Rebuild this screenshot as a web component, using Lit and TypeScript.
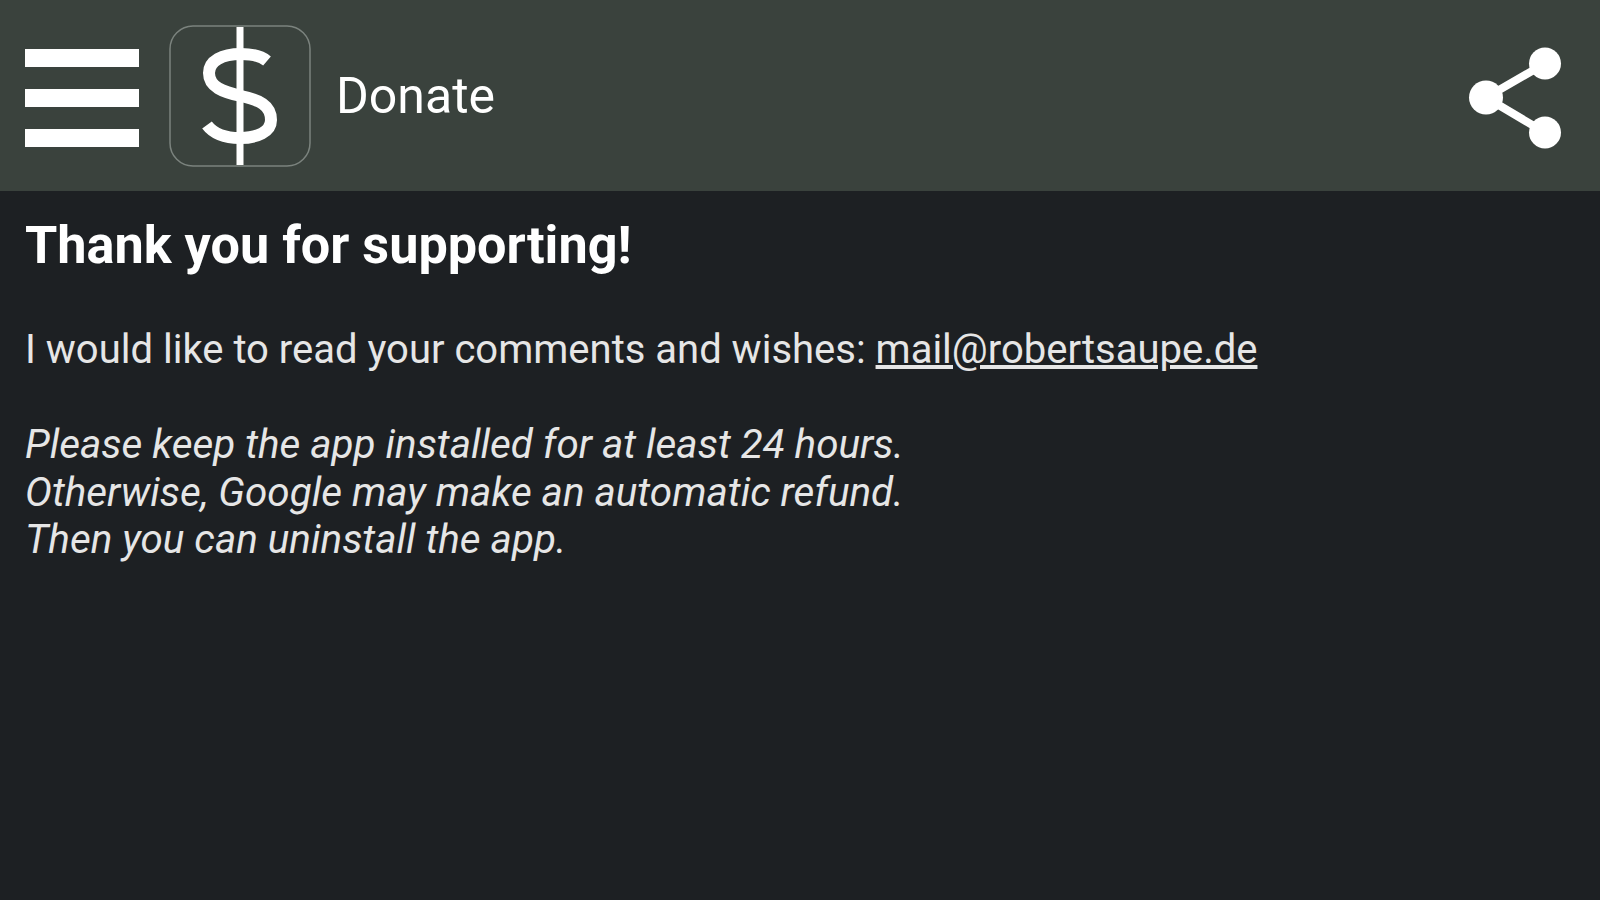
import { LitElement, html, css } from 'lit';
import { customElement } from 'lit/decorators.js';

@customElement('app-root')
export class AppRoot extends LitElement {
  static styles = css`
    :host {
      display: block;
      height: 900px;
      background: #1d2023;
      font-family: Roboto, "Liberation Sans", sans-serif;
      overflow: hidden;
    }
    .bar {
      display: flex;
      align-items: center;
      height: 191px;
      padding: 0 38px 0 25px;
      background: #3a423d;
      color: #fff;
    }
    .menu {
      display: flex;
      flex-direction: column;
      gap: 22px;
      width: 114px;
      padding-top: 4px;
    }
    .menu span {
      height: 18px;
      background: #fff;
    }
    .logo {
      display: block;
      width: 142px;
      height: 142px;
      margin-left: 30px;
    }
    .title {
      margin-left: 25px;
      font-size: 50px;
      flex: 1;
    }
    .share {
      display: block;
      width: 96px;
      height: 106px;
    }
    main {
      padding: 28px 25px;
      color: #e6e6e6;
      font-size: 40px;
      line-height: 47.4px;
    }
    h1 {
      margin: 0;
      font-size: 52.2px;
      font-weight: 700;
      line-height: 54px;
      color: #fff;
    }
    p {
      margin: 0;
    }
    .comments {
      margin-top: 53px;
    }
    .comments a {
      color: inherit;
      text-decoration: underline;
    }
    .note {
      margin-top: 48px;
      font-size: 40.4px;
      font-style: italic;
    }
  `;

  render() {
    return html`
      <header class="bar">
        <div class="menu"><span></span><span></span><span></span></div>
        <svg class="logo" viewBox="0 0 142 142" fill="none">
          <rect x="1" y="1" width="140" height="140" rx="23" stroke="#7b837e" stroke-width="1.5" />
          <path d="M71 2V140" stroke="#fff" stroke-width="7" />
          <path
            d="M98 36C92 31 84 29 72 29C53 29 40 36 40 48C40 62 54 67 72 71C90 75 102 80 102 95C102 107 88 113 71 113C55 113 44 108 38 100"
            stroke="#fff"
            stroke-width="12"
          />
        </svg>
        <span class="title">Donate</span>
        <svg class="share" viewBox="0 0 96 106" fill="#fff" stroke="#fff">
          <path d="M79 20.5L20 54.5L79 89.5" fill="none" stroke-width="8" />
          <circle cx="79" cy="20.5" r="16" stroke="none" />
          <circle cx="20" cy="54.5" r="17" stroke="none" />
          <circle cx="79" cy="89.5" r="16" stroke="none" />
        </svg>
      </header>
      <main>
        <h1>Thank you for supporting!</h1>
        <p class="comments">
          I would like to read your comments and wishes:
          <a href="mailto:mail@robertsaupe.de">mail@robertsaupe.de</a>
        </p>
        <p class="note">
          Please keep the app installed for at least 24 hours.<br />
          Otherwise, Google may make an automatic refund.<br />
          Then you can uninstall the app.
        </p>
      </main>
    `;
  }
}
